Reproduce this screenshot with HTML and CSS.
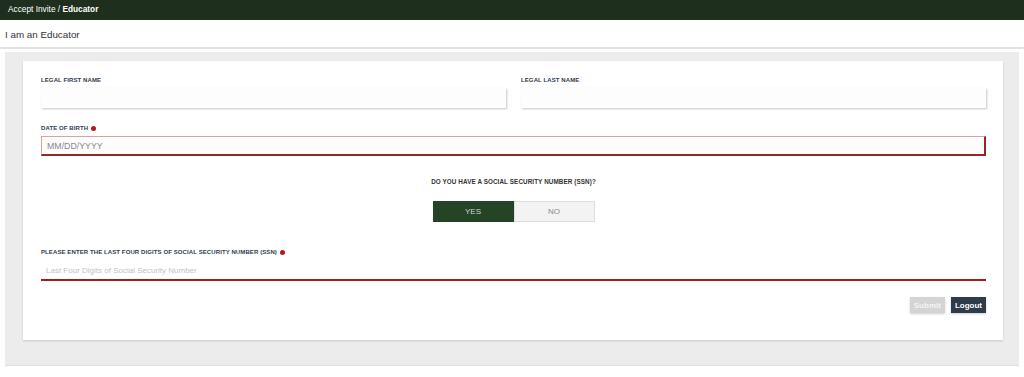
FILE: index.html
```html
<!DOCTYPE html>
<html lang="en">
<head>
    <meta charset="UTF-8">
    <title>Accept Invite - Educator</title>
    <link rel="stylesheet" href="styles.css">
</head>
<body>
    <div class="topbar">Accept Invite / <strong>Educator</strong></div>
    <div class="page-title">I am an Educator</div>

    <div class="panel">
        <form class="card">
            <div class="form-row">
                <div class="form-group">
                    <label for="firstName">Legal First Name</label>
                    <input type="text" id="firstName" class="field">
                </div>
                <div class="form-group">
                    <label for="lastName">Legal Last Name</label>
                    <input type="text" id="lastName" class="field">
                </div>
            </div>

            <div class="form-group">
                <label for="dob">Date of Birth <span class="req"></span></label>
                <input type="text" id="dob" class="field field-error" placeholder="MM/DD/YYYY">
            </div>

            <div class="ssn-question">
                <div class="question">Do you have a Social Security Number (SSN)?</div>
                <div class="toggle">
                    <button type="button" class="toggle-btn active">YES</button>
                    <button type="button" class="toggle-btn">NO</button>
                </div>
            </div>

            <div class="form-group last">
                <label for="ssn">Please enter the last four digits of Social Security Number (SSN) <span class="req"></span></label>
                <input type="text" id="ssn" class="field field-underline" placeholder="Last Four Digits of Social Security Number">
            </div>

            <div class="form-actions">
                <button type="submit" class="btn btn-disabled" disabled>Submit</button>
                <button type="button" class="btn btn-dark">Logout</button>
            </div>
        </form>
    </div>
</body>
</html>
```

FILE: styles.css
```css
body {
    margin: 0;
    font-family: "Liberation Sans", Arial, sans-serif;
    color: #333;
    background: #fff;
}

.topbar {
    height: 20px;
    line-height: 19px;
    background: #1e301d;
    color: #fff;
    font-size: 8.3px;
    padding: 0 8px;
}

.page-title {
    font-size: 9.8px;
    line-height: 13px;
    color: #333;
    padding: 8px 5px 6px;
    border-bottom: 2px solid #e2e2e2;
}

.panel {
    margin: 3px 5px 0;
    background: #ececec;
    padding: 9px 16px 25px 18px;
    border-bottom: 1px solid #e0e0e0;
}

.card {
    background: #fff;
    padding: 16px 17px 27px 18px;
    box-shadow: 0 1px 2px rgba(0, 0, 0, 0.15);
}

.form-row {
    display: flex;
    gap: 15px;
}

.form-row .form-group {
    flex: 1;
}

.form-group {
    margin-bottom: 17px;
}

.form-group.last {
    margin-bottom: 16px;
}

label {
    display: flex;
    align-items: center;
    gap: 3px;
    font-size: 6px;
    line-height: 7px;
    font-weight: bold;
    text-transform: uppercase;
    color: #2f3b4c;
    margin-bottom: 4px;
    letter-spacing: 0.1px;
}

.form-group.last label {
    margin-bottom: 5px;
}

.req {
    display: inline-block;
    width: 5px;
    height: 5px;
    border-radius: 50%;
    background: #b01a1a;
}

.field {
    display: block;
    width: 100%;
    height: 20px;
    box-sizing: border-box;
    border: none;
    background: #fdfdfd;
    box-shadow: 1px 1px 2px rgba(0, 0, 0, 0.22);
    font-family: inherit;
    font-size: 8px;
    padding: 0 5px;
    outline: none;
}

.field::placeholder {
    color: #888;
}

.field-error {
    border: 1px solid #d7a3a3;
    border-right: 2px solid #962626;
    border-bottom: 2px solid #962626;
    box-shadow: none;
    font-size: 8.8px;
}

.field-underline {
    box-shadow: none;
    border-bottom: 2px solid #a31c1c;
    background: #fff;
}

.field-underline::placeholder {
    color: #c2c2c2;
}

.ssn-question {
    text-align: center;
    margin: 22px 0 27px;
}

.question {
    font-size: 6.3px;
    line-height: 7px;
    font-weight: bold;
    text-transform: uppercase;
    color: #333;
    letter-spacing: 0.1px;
    margin-bottom: 15px;
}

.toggle {
    display: inline-flex;
}

.toggle-btn {
    width: 81px;
    height: 21px;
    border: 1px solid #ddd;
    background: #f3f3f3;
    color: #888;
    font-family: inherit;
    font-size: 8px;
    cursor: pointer;
}

.toggle-btn.active {
    background: #254325;
    border-color: #254325;
    color: #d0d8d0;
}

.form-actions {
    display: flex;
    justify-content: flex-end;
    gap: 6px;
}

.btn {
    height: 16px;
    padding: 0 4px;
    border: none;
    font-family: inherit;
    font-size: 8px;
    font-weight: bold;
    color: #fff;
    box-shadow: 0 1px 2px rgba(0, 0, 0, 0.2);
}

.btn-disabled {
    background: #d4d4d4;
    color: #f3f3f3;
}

.btn-dark {
    background: #2f3a4b;
}
```
